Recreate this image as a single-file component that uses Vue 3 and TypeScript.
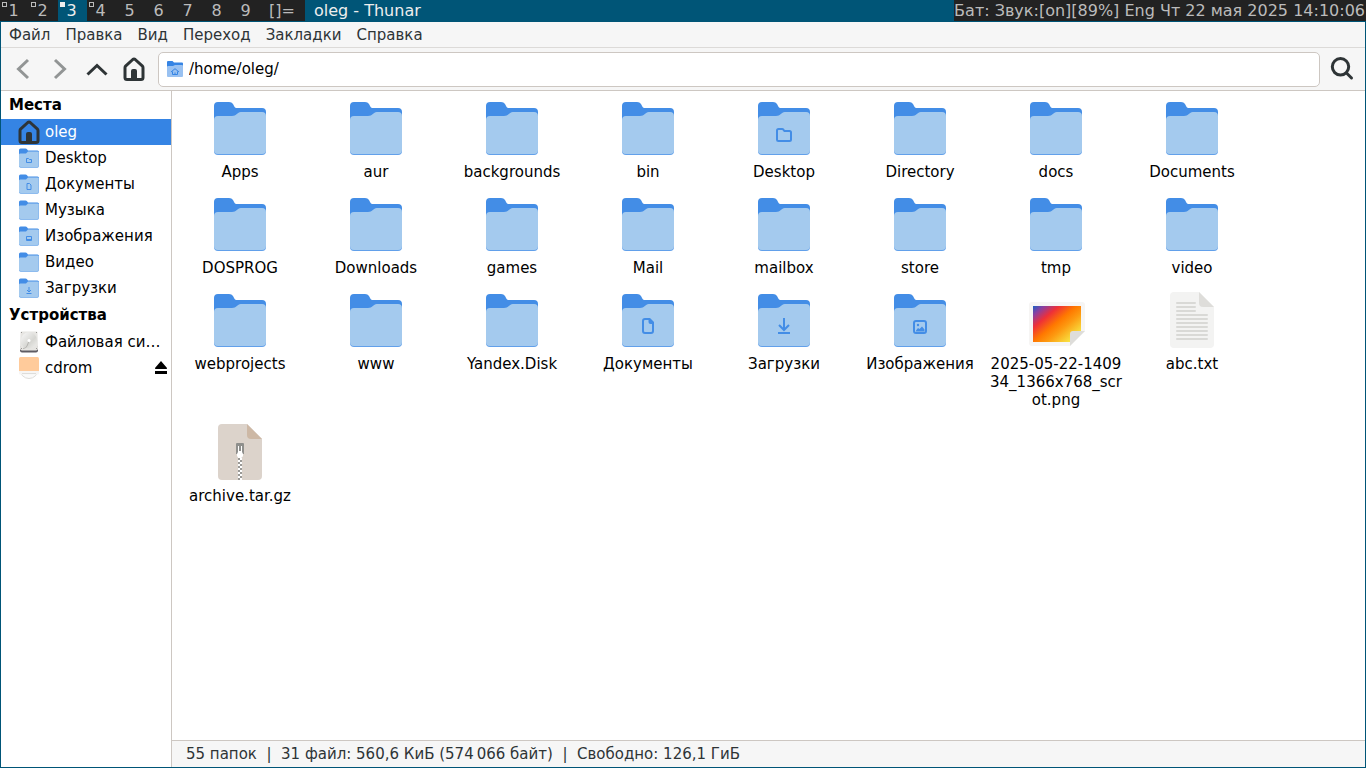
<script setup lang="ts">
import { ref } from 'vue'

interface Tag { label: string; mark?: 'outline' | 'filled' }
interface Place { name: string; icon: string; selected?: boolean; ejectable?: boolean }
interface Entry { name: string; icon: string; emblem?: string }

const tags: Tag[] = [
  { label: '1', mark: 'outline' },
  { label: '2', mark: 'outline' },
  { label: '3', mark: 'filled' },
  { label: '4', mark: 'outline' },
  { label: '5' },
  { label: '6' },
  { label: '7' },
  { label: '8' },
  { label: '9' },
]
const activeTag = '3'

const menus = ['Файл', 'Правка', 'Вид', 'Переход', 'Закладки', 'Справка']

const places: Place[] = [
  { name: 'oleg', icon: 'home', selected: true },
  { name: 'Desktop', icon: 'place-desktop' },
  { name: 'Документы', icon: 'place-documents' },
  { name: 'Музыка', icon: 'place-folder' },
  { name: 'Изображения', icon: 'place-pictures' },
  { name: 'Видео', icon: 'place-folder' },
  { name: 'Загрузки', icon: 'place-downloads' },
]
const devices: Place[] = [
  { name: 'Файловая си…', icon: 'disk' },
  { name: 'cdrom', icon: 'optical', ejectable: true },
]
const sections = [
  { title: 'Места', rows: places },
  { title: 'Устройства', rows: devices },
]

const folder = (name: string, emblem?: string): Entry => ({ name, icon: 'folder', emblem })
const entries: Entry[] = [
  folder('Apps'),
  folder('aur'),
  folder('backgrounds'),
  folder('bin'),
  folder('Desktop', 'emblem-desktop'),
  folder('Directory'),
  folder('docs'),
  folder('Documents'),
  folder('DOSPROG'),
  folder('Downloads'),
  folder('games'),
  folder('Mail'),
  folder('mailbox'),
  folder('store'),
  folder('tmp'),
  folder('video'),
  folder('webprojects'),
  folder('www'),
  folder('Yandex.Disk'),
  folder('Документы', 'emblem-documents'),
  folder('Загрузки', 'emblem-downloads'),
  folder('Изображения', 'emblem-pictures'),
  { name: '2025-05-22-140934_1366x768_scrot.png', icon: 'image' },
  { name: 'abc.txt', icon: 'text' },
  { name: 'archive.tar.gz', icon: 'archive' },
]

const path = ref('/home/oleg/')
</script>

<template>
  <div class="screen">
    <svg class="defs" width="0" height="0" aria-hidden="true">
      <defs>
        <linearGradient id="sunset" x1="0" y1="0" x2="1" y2="0.9">
          <stop offset="0" stop-color="#1a5fc4" />
          <stop offset="0.13" stop-color="#8a3fa0" />
          <stop offset="0.3" stop-color="#ee3038" />
          <stop offset="0.5" stop-color="#ff7800" />
          <stop offset="0.65" stop-color="#fd9a10" />
          <stop offset="0.9" stop-color="#f8e040" />
        </linearGradient>
        <linearGradient id="platter" x1="0" y1="0" x2="1" y2="1">
          <stop offset="0" stop-color="#fafafa" />
          <stop offset="0.6" stop-color="#d6d6d2" />
          <stop offset="1" stop-color="#f2f2f0" />
        </linearGradient>
        <pattern id="teeth" width="4" height="4" patternUnits="userSpaceOnUse">
          <rect width="4" height="4" fill="#fff" />
          <rect width="2" height="2" fill="#9a9996" />
          <rect x="2" y="2" width="2" height="2" fill="#9a9996" />
        </pattern>
      </defs>
      <symbol id="folder" viewBox="0 0 64 64">
        <path fill="#62a0ea" d="M6 40h52v15a4 4 0 0 1-4 4H10a4 4 0 0 1-4-4z" />
        <path fill="#438de6" d="M6 10a4 4 0 0 1 4-4h11c2 0 3 .7 4 2l1.600 3c.5.8 1.200 1 2.400 1H54a4 4 0 0 1 4 4v30H6z" />
        <path fill="#a4caee" d="M6 24a4 4 0 0 1 4-4h14c2.500 0 3.200-.5 4.500-1.700l1-.8C31 16.300 32 16 34 16h20a4 4 0 0 1 4 4v34a4 4 0 0 1-4 4H10a4 4 0 0 1-4-4z" />
      </symbol>
      <symbol id="emblem-desktop" viewBox="0 0 64 64">
        <path fill="none" stroke="#438de6" stroke-width="2" stroke-linejoin="round" d="M25 44V34.500Q25 33 26.500 33H30q1 0 1.500.8L32.500 35H37.500Q39 35 39 36.500V43.500Q39 45 37.500 45H26.500Q25 45 25 43.500z" />
      </symbol>
      <symbol id="emblem-documents" viewBox="0 0 64 64">
        <path fill="none" stroke="#438de6" stroke-width="2" stroke-linejoin="round" d="M29 31h4.500L37 34.500V43q0 2-2 2h-6q-2 0-2-2V33q0-2 2-2z" />
        <path fill="#438de6" d="M32.500 30.500h1.500l4 4V36h-3.500q-2 0-2-2z" />
      </symbol>
      <symbol id="emblem-downloads" viewBox="0 0 64 64">
        <path fill="none" stroke="#438de6" stroke-width="2" d="M32 30v11.500M27 37l5 5 5-5M26 45h12" />
      </symbol>
      <symbol id="emblem-pictures" viewBox="0 0 64 64">
        <rect x="26" y="33" width="12" height="12" rx="2" fill="none" stroke="#438de6" stroke-width="2" />
        <circle cx="30" cy="37" r="1.200" fill="#438de6" />
        <path fill="#438de6" d="M28 43.500v-1l2-2.500 1.500 1 2.500-2.500 2.500 3v2z" />
      </symbol>

      <symbol id="place-folder" viewBox="0 0 24 24">
        <path fill="#438de6" d="M2 4q0-1.500 1.500-1.500h5q1 0 1.500.8l1 1.200h9.500Q22 4.500 22 6V20H2z" />
        <path fill="#a4caee" d="M2 8.500Q2 7.500 3.500 7.500h5.500L11 5.500h9.500Q22 5.500 22 7v13q0 1.500-1.500 1.500h-17Q2 21.500 2 20z" />
        <path fill="none" stroke="#8dbbee" stroke-width="1" d="M2.500 20q0 1.500 1.500 1.500h16q1.500 0 1.500-1.500V7" />
      </symbol>
      <symbol id="place-desktop" viewBox="0 0 24 24">
        <use href="#place-folder" />
        <path fill="none" stroke="#438de6" d="M9.500 16.500v-4h2l1 1h2v3z" />
      </symbol>
      <symbol id="place-documents" viewBox="0 0 24 24">
        <use href="#place-folder" />
        <path fill="none" stroke="#438de6" d="M10 11.500h2.500l1.500 1.500v4.500h-4z" />
      </symbol>
      <symbol id="place-pictures" viewBox="0 0 24 24">
        <use href="#place-folder" />
        <path fill="none" stroke="#438de6" d="M9.500 12.500h5v4h-5zM10 15.500h4" />
      </symbol>
      <symbol id="place-downloads" viewBox="0 0 24 24">
        <use href="#place-folder" />
        <path fill="none" stroke="#438de6" d="M12 11v5M10 14l2 2 2-2M9.500 17.500h5" />
      </symbol>
      <symbol id="path-home" viewBox="0 0 16 16">
        <path fill="#3584e4" d="M0 1q0-1 1-1h4.500l1.500 1.500h8q1 0 1 1V14H0z" />
        <path fill="#99c1f1" d="M0 6q0-1 1-1h5l2-1h7q1 0 1 1v10q0 1-1 1H1q-1 0-1-1z" />
        <path fill="none" stroke="#3584e4" d="M4 11l4-3.300L12 11M5.500 10.500v3h5v-3M8 13.500v-2" />
      </symbol>
      <symbol id="home" viewBox="0 0 24 24">
        <path fill="none" stroke="#2e3436" stroke-width="3" stroke-linejoin="round" d="M12 2Q12.600 2 13.200 2.500L20.200 8.800Q21 9.600 21 10.700V20.500Q21 22.500 19 22.500H5Q3 22.500 3 20.500V10.700Q3 9.600 3.800 8.800L10.800 2.500Q11.400 2 12 2z" />
        <path fill="#2e3436" stroke="none" d="M9 23v-9q0-2 2-2h2q2 0 2 2v9z" />
      </symbol>
      <symbol id="disk" viewBox="0 0 24 24">
        <path fill="#5e5c64" d="M3 16h18v4.500q0 2-2 2H5q-2 0-2-2z" />
        <path fill="#e6e5e2" d="M4.500 1.500h15q1 0 1 1l.5 16q0 2-2 2H5q-2 0-2-2l.5-16q0-1 1-1z" />
        <circle cx="12" cy="10.500" r="8.200" fill="url(#platter)" />
        <path fill="none" stroke="#b5b4b0" d="M6 18.500q3 0 4-2.500l2-5" />
        <circle cx="12" cy="10.500" r="1.500" fill="#fff" />
        <path fill="#9a9996" d="M4 2h1v1H4zM19 2h1v1h-1zM4 18h1v1H4zM19 18h1v1h-1z" />
      </symbol>
      <symbol id="optical" viewBox="0 0 24 24">
        <circle cx="12" cy="13.500" r="9" fill="#fafafa" stroke="#deddda" />
        <path fill="#f6f5f4" d="M2 14h20v3.500q0 1-1 1H3q-1 0-1-1z" />
        <path fill="#ffcb9b" d="M2 2.500q0-1.500 1.500-1.500h17Q22 1 22 2.500V15H2z" />
        <path fill="none" stroke="#deddda" d="M5 17.500h14" />
      </symbol>

      <symbol id="image" viewBox="0 0 64 64">
        <path fill="#f6f5f4" d="M8 14h50q3 0 3 3v26L46 58H8q-3 0-3-3V17q0-3 3-3z" />
        <path fill="url(#sunset)" d="M9 18h48v25L46 54H9z" />
        <path fill="#deddda" d="M46 58V46q0-3 3-3h12z" />
      </symbol>
      <symbol id="text" viewBox="0 0 64 64">
        <path fill="#f3f3f2" d="M14 4h25l15 15v37q0 4-4 4H14q-4 0-4-4V8q0-4 4-4z" />
        <path fill="#deddda" d="M39 4l15 15H43q-4 0-4-4z" />
        <path fill="none" stroke="#d9d9d6" stroke-width="2" stroke-linecap="round" d="M17 15h18M17 19h18M17 23h18M17 27h30M17 31h30M17 35h30M17 39h30M17 43h30M17 47h30M17 51h30" />
      </symbol>
      <symbol id="archive" viewBox="0 0 64 64">
        <path fill="#dcd3cb" d="M14 4h25l15 15v37q0 4-4 4H14q-4 0-4-4V8q0-4 4-4z" />
        <path fill="#cdb8a5" d="M39 4l15 15H43q-4 0-4-4z" />
        <path fill="url(#teeth)" d="M30 36h4v24h-4z" />
        <path fill="#8f8f8c" d="M29 23h6q1 0 1 1v10h-8V24q0-1 1-1z" />
        <path fill="#fff" d="M30 26h1v5h2v-5h1v6l1 2v2l-1.500 2h-3L29 36v-2l1-2z" />
      </symbol>
    </svg>

    <header class="bar">
      <nav class="tags">
        <button
          v-for="tag in tags"
          :key="tag.label"
          type="button"
          class="tag"
          :class="{ active: tag.label === activeTag }"
        >
          <span v-if="tag.mark" class="mark" :class="tag.mark"></span>{{ tag.label }}
        </button>
        <button type="button" class="tag layout">[]=</button>
      </nav>
      <div class="title">oleg - Thunar</div>
      <div class="status">Бат: Звук:[on][89%] Eng Чт 22 мая 2025 14:10:06</div>
    </header>

    <main class="window">
      <nav class="menubar">
        <button v-for="menu in menus" :key="menu" type="button">{{ menu }}</button>
      </nav>

      <div class="toolbar">
        <button type="button" class="tool dim" aria-label="Назад">
          <svg viewBox="0 0 24 24"><path d="M17 3L7.500 12l9.500 9" /></svg>
        </button>
        <button type="button" class="tool dim" aria-label="Вперёд">
          <svg viewBox="0 0 24 24"><path d="M7 3l9.500 9L7 21" /></svg>
        </button>
        <button type="button" class="tool" aria-label="Вверх">
          <svg viewBox="0 0 24 24"><path d="M2.500 17.500l9.500-9 9.500 9" /></svg>
        </button>
        <button type="button" class="tool" aria-label="Домой">
          <svg viewBox="0 0 24 24"><use href="#home" /></svg>
        </button>
        <label class="path">
          <svg viewBox="0 0 16 16"><use href="#path-home" /></svg>
          <input v-model="path" type="text" aria-label="Адрес" spellcheck="false" />
        </label>
        <button type="button" class="tool" aria-label="Поиск">
          <svg viewBox="0 0 24 24"><circle cx="10.500" cy="9.800" r="8.200" /><path stroke-linecap="round" d="M16.500 16l5 5" /></svg>
        </button>
      </div>

      <div class="body">
        <aside class="sidebar">
          <section v-for="section in sections" :key="section.title">
            <h2>{{ section.title }}</h2>
            <ul>
              <li v-for="row in section.rows" :key="row.name" :class="{ selected: row.selected }">
                <a href="#">
                  <svg viewBox="0 0 24 24"><use :href="'#' + row.icon" /></svg>
                  <span>{{ row.name }}</span>
                </a>
                <button v-if="row.ejectable" type="button" class="eject" aria-label="Извлечь">
                  <svg viewBox="0 0 16 16"><path d="M8 1L14 8q.3 1-.8 1H2.800Q1.700 9 2 8zM2 11h12v3H2z" /></svg>
                </button>
              </li>
            </ul>
          </section>
        </aside>

        <section class="content">
          <ul class="grid">
            <li v-for="entry in entries" :key="entry.name">
              <button type="button" class="entry">
                <svg viewBox="0 0 64 64">
                  <use :href="'#' + entry.icon" />
                  <use v-if="entry.emblem" :href="'#' + entry.emblem" />
                </svg>
                <span>{{ entry.name }}</span>
              </button>
            </li>
          </ul>
          <footer>55 папок&nbsp; |&nbsp; 31 файл: 560,6 КиБ (574&#8239;066 байт)&nbsp; |&nbsp; Свободно: 126,1 ГиБ</footer>
        </section>
      </div>
    </main>
  </div>
</template>

<style>
html,
body {
  margin: 0;
  overflow: hidden;
}
</style>

<style scoped>
.screen {
  display: flex;
  flex-direction: column;
  height: 100vh;
  font: 15px/18px "DejaVu Sans", sans-serif;
  color: #000;
  background: #fff;
}
.defs {
  position: absolute;
}
button,
input {
  font: inherit;
  color: inherit;
  padding: 0;
  border: 0;
  margin: 0;
  background: none;
}
ul {
  list-style: none;
  margin: 0;
  padding: 0;
}
svg {
  display: block;
  flex: none;
}

.bar {
  display: flex;
  height: 21px;
  flex: none;
  font-size: 16px;
  line-height: 21px;
  color: #bbb;
  background: #222;
}
.tags {
  display: flex;
}
.tag {
  position: relative;
  width: 29px;
  padding-right: 2px;
  text-align: center;
}
.tag.layout {
  width: 44px;
}
.tag.active,
.title {
  color: #eee;
  background: #057;
}
.mark {
  position: absolute;
  left: 2px;
  top: 2px;
  width: 5px;
  height: 5px;
  box-sizing: border-box;
  border: 1px solid #bbb;
}
.mark.filled {
  background: #eee;
  border-color: #eee;
}
.title {
  flex: 1;
  padding-left: 9px;
  white-space: nowrap;
}
.status {
  padding-right: 1px;
  white-space: nowrap;
}

.window {
  flex: 1;
  min-height: 0;
  display: flex;
  flex-direction: column;
  border: 1px solid #057;
}
.menubar {
  display: flex;
  gap: 15px;
  height: 25px;
  flex: none;
  padding: 0 8px;
  color: #2e3436;
  background: #f6f6f6;
  border-bottom: 1px solid #dcdad8;
}
.toolbar {
  display: flex;
  align-items: center;
  height: 42px;
  flex: none;
  padding: 0 5px 0 3px;
  background: #f6f6f6;
  border-bottom: 1px solid #cdc7c2;
}
.tool {
  width: 37px;
  height: 34px;
  display: flex;
  align-items: center;
  justify-content: center;
  color: #2e3436;
}
.tool.dim {
  color: #929595;
}
.tool svg {
  width: 24px;
  height: 24px;
  fill: none;
  stroke: currentColor;
  stroke-width: 3;
}
.path {
  flex: 1;
  display: flex;
  align-items: center;
  gap: 6px;
  height: 35px;
  box-sizing: border-box;
  margin: 0 3px 0 6px;
  padding: 0 8px;
  background: #fff;
  border: 1px solid #cdc7c2;
  border-radius: 5px;
}
.path svg {
  width: 16px;
  height: 16px;
}
.path input {
  flex: 1;
  min-width: 0;
  outline: 0;
}

.body {
  flex: 1;
  min-height: 0;
  display: flex;
}
.sidebar {
  width: 170px;
  flex: none;
  border-right: 1px solid #cdc7c2;
}
.sidebar h2 {
  margin: 0;
  padding: 0 8px;
  font-size: 15px;
  line-height: 28px;
}
.sidebar li {
  display: flex;
  align-items: center;
  height: 26px;
  padding: 0 2px 0 16px;
}
.sidebar li.selected {
  color: #fff;
  background: #3584e4;
}
.sidebar a {
  flex: 1;
  min-width: 0;
  display: flex;
  align-items: center;
  gap: 4px;
  color: inherit;
  text-decoration: none;
}
.sidebar a svg {
  width: 24px;
  height: 24px;
}
.sidebar a span {
  white-space: nowrap;
}
.eject svg {
  width: 16px;
  height: 16px;
}

.content {
  flex: 1;
  min-width: 0;
  display: flex;
  flex-direction: column;
}
.grid {
  flex: 1;
  display: grid;
  grid-template-columns: repeat(auto-fill, 136px);
  align-content: start;
  row-gap: 11px;
  padding-top: 5px;
}
.entry {
  display: flex;
  flex-direction: column;
  align-items: center;
  gap: 3px;
  width: 100%;
  padding: 0 2px;
}
.entry svg {
  width: 64px;
  height: 64px;
}
.entry span {
  max-width: 100%;
  word-break: break-all;
}
footer {
  flex: none;
  padding: 0 14px;
  line-height: 26px;
  color: #2e3436;
  background: #f6f6f6;
  border-top: 1px solid #cdc7c2;
}
</style>
